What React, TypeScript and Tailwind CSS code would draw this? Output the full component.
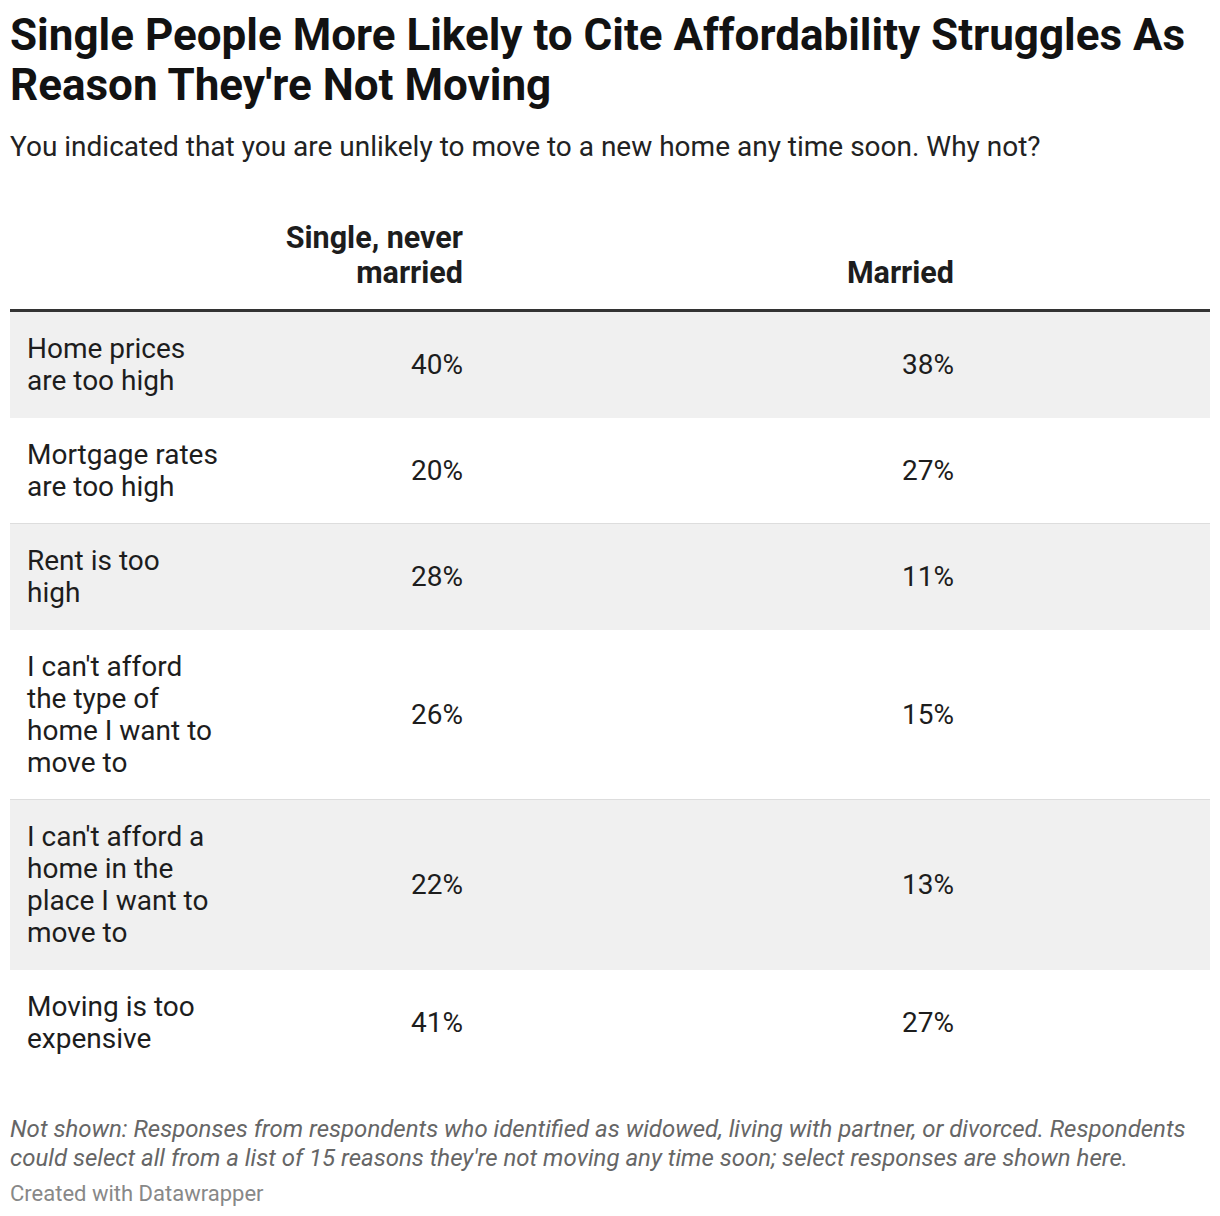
const rows = [
  { label: ["Home prices", "are too high"], single: "40%", married: "38%" },
  { label: ["Mortgage rates", "are too high"], single: "20%", married: "27%" },
  { label: ["Rent is too", "high"], single: "28%", married: "11%" },
  {
    label: ["I can't afford", "the type of", "home I want to", "move to"],
    single: "26%",
    married: "15%",
  },
  {
    label: ["I can't afford a", "home in the", "place I want to", "move to"],
    single: "22%",
    married: "13%",
  },
  { label: ["Moving is too", "expensive"], single: "41%", married: "27%" },
];

export default function App() {
  return (
    <div
      className="min-h-screen bg-white px-[10px] pt-[10px] text-[#1d1d1d]"
      style={{ fontFamily: "Roboto, 'Liberation Sans', sans-serif" }}
    >
      {/* Title */}
      <h1 className="text-[44px] font-bold leading-[50px] text-[#121212]">
        Single People More Likely to Cite Affordability Struggles As
        <br />
        Reason They're Not Moving
      </h1>
      <p className="mt-[21px] text-[28px] leading-[32px] text-[#222]">
        You indicated that you are unlikely to move to a new home any time soon. Why not?
      </p>

      {/* Table */}
      <div className="mt-[57px]">
        <div className="grid grid-cols-[230px_240px_491px_1fr] border-b-[3px] border-[#333] pb-[19px] text-[30.5px] font-bold leading-[35px]">
          <div />
          <div className="pr-[17px] text-right">
            Single, never
            <br />
            married
          </div>
          <div className="self-end pr-[17px] text-right">Married</div>
          <div />
        </div>

        {rows.map((row, i) => (
          <div
            key={i}
            className={
              "grid grid-cols-[230px_240px_491px_1fr] items-center border-b text-[28px] leading-[32px] " +
              (i % 2 === 0
                ? "border-[#f0f0f0] bg-[#f0f0f0]"
                : i === rows.length - 1
                  ? "border-white bg-white"
                  : "border-[#dddddd] bg-white")
            }
          >
            <div className="pt-[21px] pb-[20px] pl-[17px]">
              {row.label.map((line) => (
                <div key={line}>{line}</div>
              ))}
            </div>
            <div className="pr-[17px] text-right">{row.single}</div>
            <div className="pr-[17px] text-right">{row.married}</div>
            <div />
          </div>
        ))}
      </div>

      {/* Notes */}
      <div className="mt-[39px] text-[24px] italic leading-[29px] text-[#666]">
        Not shown: Responses from respondents who identified as widowed, living with partner, or divorced. Respondents
        <br />
        could select all from a list of 15 reasons they're not moving any time soon; select responses are shown here.
      </div>
      <div className="mt-[8px] text-[22px] leading-[26px] text-[#888]">Created with Datawrapper</div>
    </div>
  );
}
